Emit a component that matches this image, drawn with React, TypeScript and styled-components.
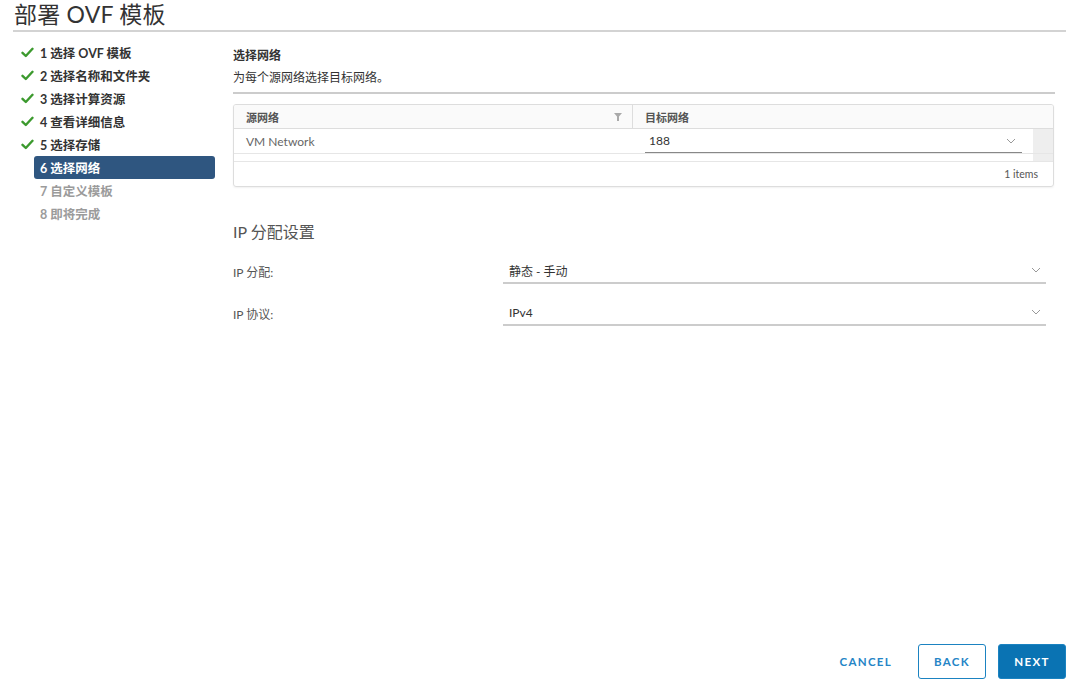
import styled, { createGlobalStyle } from "styled-components";

const GlobalStyle = createGlobalStyle`
  html, body {
    margin: 0;
    padding: 0;
    background: #fff;
  }
  body {
    font-family: "Lato", "Noto Sans CJK SC", sans-serif;
    color: #333;
  }
`;

const steps = [
  { label: "1 选择 OVF 模板", state: "done" },
  { label: "2 选择名称和文件夹", state: "done" },
  { label: "3 选择计算资源", state: "done" },
  { label: "4 查看详细信息", state: "done" },
  { label: "5 选择存储", state: "done" },
  { label: "6 选择网络", state: "active" },
  { label: "7 自定义模板", state: "todo" },
  { label: "8 即将完成", state: "todo" },
];

const Check = () => (
  <svg width="13" height="11" viewBox="0 0 13 11">
    <path d="M1.5 5.8 L4.8 9 L11.5 1.8" fill="none" stroke="#3c9a2e" strokeWidth="2.4" strokeLinecap="round" strokeLinejoin="round" />
  </svg>
);

const Chevron = () => (
  <svg width="10" height="6" viewBox="0 0 10 6">
    <path d="M1 1 L5 5 L9 1" fill="none" stroke="#999" strokeWidth="1" />
  </svg>
);

const Filter = () => (
  <svg width="8" height="8" viewBox="0 0 8 8">
    <path d="M0 0 H8 L5 3.5 V8 H3 V3.5 Z" fill="#aaa" />
  </svg>
);

const App = () => {
  return (
    <Page>
      <GlobalStyle />
      <Title>部署 OVF 模板</Title>
      <Body>
        <Nav>
          {steps.map((s) => (
            <NavItem key={s.label} $state={s.state}>
              {s.state === "done" && (
                <IconSlot>
                  <Check />
                </IconSlot>
              )}
              <NavLabel $state={s.state}>{s.label}</NavLabel>
            </NavItem>
          ))}
        </Nav>
        <Content>
          <Heading>选择网络</Heading>
          <Sub>为每个源网络选择目标网络。</Sub>
          <Grid>
            <HeadRow>
              <HeadCell $w={399}>
                源网络
                <Filter />
              </HeadCell>
              <HeadCell $w={420} $last>
                目标网络
              </HeadCell>
            </HeadRow>
            <DataRow>
              <Cell $w={399}>VM Network</Cell>
              <SelectCell>
                <GridSelect>
                  188
                  <Chevron />
                </GridSelect>
              </SelectCell>
              <Gutter />
            </DataRow>
            <SpacerRow>
              <Gutter />
            </SpacerRow>
            <GridFooter>1 items</GridFooter>
          </Grid>

          <SectionTitle>IP 分配设置</SectionTitle>
          <FormRow>
            <FormLabel>IP 分配:</FormLabel>
            <Select>
              静态 - 手动
              <Chevron />
            </Select>
          </FormRow>
          <FormRow>
            <FormLabel>IP 协议:</FormLabel>
            <Select>
              IPv4
              <Chevron />
            </Select>
          </FormRow>
        </Content>
      </Body>
      <Footer>
        <Button $variant="link">CANCEL</Button>
        <Button $variant="outline">BACK</Button>
        <Button $variant="solid">NEXT</Button>
      </Footer>
    </Page>
  );
};

export default App;

const Page = styled.div`
  height: 690px;
  box-sizing: border-box;
  display: flex;
  flex-direction: column;
  padding: 0 14px 11px 13px;
`;

const Title = styled.h1`
  margin: 0;
  padding: 0 0 0 1px;
  height: 30px;
  font-size: 23px;
  font-weight: 400;
  line-height: 28px;
  color: #333;
  border-bottom: 2px solid #d3d3d3;
  letter-spacing: 0.2px;
`;

const Body = styled.div`
  display: flex;
  flex: 1;
  padding-top: 9px;
`;

const Nav = styled.ul`
  list-style: none;
  margin: 0;
  padding: 0;
  width: 202px;
  flex-shrink: 0;
  display: flex;
  flex-direction: column;
`;

const NavItem = styled.li<{ $state: string }>`
  display: flex;
  align-items: center;
  height: 23px;
  margin-left: ${({ $state }) => ($state === "active" ? "21px" : "0")};
  padding-left: ${({ $state }) => ($state === "active" ? "6px" : "8px")};
  background: ${({ $state }) => ($state === "active" ? "#2f5680" : "transparent")};
  border-radius: 3px;
`;

const IconSlot = styled.span`
  width: 19px;
  display: flex;
  align-items: center;
`;

const NavLabel = styled.span<{ $state: string }>`
  font-size: 12.5px;
  font-weight: 700;
  color: ${({ $state }) =>
    $state === "active" ? "#fff" : $state === "todo" ? "#9b9b9b" : "#333"};
  padding-left: ${({ $state }) => ($state === "todo" ? "19px" : "0")};
`;

const Content = styled.div`
  flex: 1;
  padding: 6px 14px 0 18px;
  display: flex;
  flex-direction: column;
`;

const Heading = styled.div`
  font-size: 12px;
  font-weight: 700;
  line-height: 18px;
  color: #333;
`;

const Sub = styled.div`
  margin-top: 2px;
  font-size: 12px;
  line-height: 22px;
  color: #333;
  padding-bottom: 3px;
  border-bottom: 2px solid #ccc;
`;

const Grid = styled.div`
  margin-top: 10px;
  border: 1px solid #ddd;
  border-radius: 3px;
  box-shadow: 0 1px 2px rgba(0, 0, 0, 0.06);
  overflow: hidden;
  margin-right: 1px;
`;

const HeadRow = styled.div`
  display: flex;
  height: 23px;
  background: #fafafa;
  border-bottom: 1px solid #ddd;
`;

const HeadCell = styled.div<{ $w: number; $last?: boolean }>`
  width: ${({ $w }) => $w}px;
  box-sizing: border-box;
  display: flex;
  align-items: center;
  justify-content: space-between;
  padding: 0 10px 0 12px;
  font-size: 11px;
  font-weight: 700;
  color: #555;
  border-right: ${({ $last }) => ($last ? "none" : "1px solid #ddd")};
`;

const DataRow = styled.div`
  display: flex;
  height: 24px;
  border-bottom: 1px solid #e6e6e6;
`;

const Cell = styled.div<{ $w: number }>`
  width: ${({ $w }) => $w}px;
  display: flex;
  align-items: center;
  padding-left: 12px;
  box-sizing: border-box;
  font-size: 12px;
  color: #666;
`;

const SelectCell = styled.div`
  flex: 1;
  padding: 0 11px 0 12px;
  display: flex;
`;

const GridSelect = styled.div`
  flex: 1;
  display: flex;
  align-items: center;
  justify-content: space-between;
  padding: 0 6px 0 4px;
  font-size: 12px;
  color: #333;
  border-bottom: 1px solid #888;
`;

const Gutter = styled.div`
  width: 20px;
  margin-left: auto;
  background: #eee;
`;

const SpacerRow = styled.div`
  display: flex;
  height: 7px;
  border-bottom: 1px solid #e6e6e6;
`;

const GridFooter = styled.div`
  height: 24px;
  display: flex;
  align-items: center;
  justify-content: flex-end;
  padding-right: 15px;
  font-size: 10.5px;
  color: #555;
`;

const SectionTitle = styled.div`
  margin-top: 35px;
  font-size: 16px;
  font-weight: 400;
  color: #555;
  line-height: 20px;
`;

const FormRow = styled.div`
  display: flex;
  align-items: flex-end;
  margin-top: 17px;
  margin-right: 9px;
  height: 25px;
`;

const FormLabel = styled.div`
  width: 270px;
  font-size: 12px;
  color: #555;
  align-self: center;
`;

const Select = styled.div`
  flex: 1;
  height: 24px;
  display: flex;
  align-items: center;
  justify-content: space-between;
  padding: 0 5px 0 6px;
  font-size: 12px;
  color: #333;
  border-bottom: 2px solid #ccc;
`;

const Footer = styled.div`
  display: flex;
  justify-content: flex-end;
  align-items: center;
  gap: 12px;
`;

const Button = styled.button<{ $variant: "link" | "outline" | "solid" }>`
  height: 35px;
  min-width: 68px;
  padding: 0 ${({ $variant }) => ($variant === "link" ? "12px" : "15px")};
  border-radius: 3px;
  font-family: "Lato", sans-serif;
  font-size: 11.5px;
  font-weight: 700;
  letter-spacing: 1.3px;
  cursor: pointer;
  border: 1px solid
    ${({ $variant }) => ($variant === "link" ? "transparent" : "#1b83c1")};
  background: ${({ $variant }) => ($variant === "solid" ? "#0a73b3" : "#fff")};
  color: ${({ $variant }) => ($variant === "solid" ? "#fff" : "#2585c6")};
  margin-right: ${({ $variant }) => ($variant === "link" ? "1px" : "0")};
`;
